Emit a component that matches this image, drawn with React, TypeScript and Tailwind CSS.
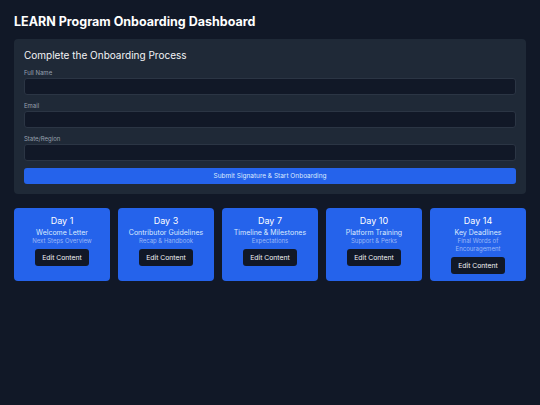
const days = [
  { day: "Day 1", title: "Welcome Letter", sub: "Next Steps Overview" },
  { day: "Day 3", title: "Contributor Guidelines", sub: "Recap & Handbook" },
  { day: "Day 7", title: "Timeline & Milestones", sub: "Expectations" },
  { day: "Day 10", title: "Platform Training", sub: "Support & Perks" },
  { day: "Day 14", title: "Key Deadlines", sub: "Final Words of Encouragement" },
];

const fields = ["Full Name", "Email", "State/Region"];

export default function App() {
  return (
    <div
      className="min-h-[405px] w-[540px] bg-[#111827] px-[14px] pt-[14px] text-white"
      style={{ fontFamily: "Inter, 'Noto Sans', sans-serif" }}
    >
      <h1 className="text-[12.5px] font-bold leading-[16px]">LEARN Program Onboarding Dashboard</h1>

      {/* Signup panel */}
      <div className="mt-[9px] rounded-[4px] bg-[#1f2937] p-[10px]">
        <h2 className="text-[10px] leading-[12px] text-gray-100">Complete the Onboarding Process</h2>
        <div className="mt-[8px] flex flex-col gap-[7px]">
          {fields.map((f) => (
            <div key={f}>
              <label className="block text-[6px] leading-[8px] text-gray-400">{f}</label>
              <input className="mt-[1px] block h-[17px] w-full rounded-[3px] border border-[#2b3544] bg-[#111827] outline-none" />
            </div>
          ))}
          <button className="h-[16px] w-full rounded-[3px] bg-[#2563eb] text-[6.5px] leading-[16px] text-blue-100">
            Submit Signature &amp; Start Onboarding
          </button>
        </div>
      </div>

      {/* Day cards */}
      <div className="mt-[14px] grid grid-cols-5 gap-[8px]">
        {days.map((d) => (
          <div
            key={d.day}
            className="flex flex-col items-center rounded-[4px] bg-[#2563eb] px-[10px] pb-[7px] pt-[7px] text-center"
          >
            <div className="text-[9px] leading-[12px] text-white">{d.day}</div>
            <div className="mt-[1px] text-[7px] leading-[9px] text-blue-100">{d.title}</div>
            <div className="text-[6px] leading-[8px] text-[#9bb8f8]">{d.sub}</div>
            <button className="mt-[4px] h-[17px] rounded-[3px] bg-[#111827] px-[7px] text-[6.8px] leading-[17px] text-gray-100">
              Edit Content
            </button>
          </div>
        ))}
      </div>
    </div>
  );
}
